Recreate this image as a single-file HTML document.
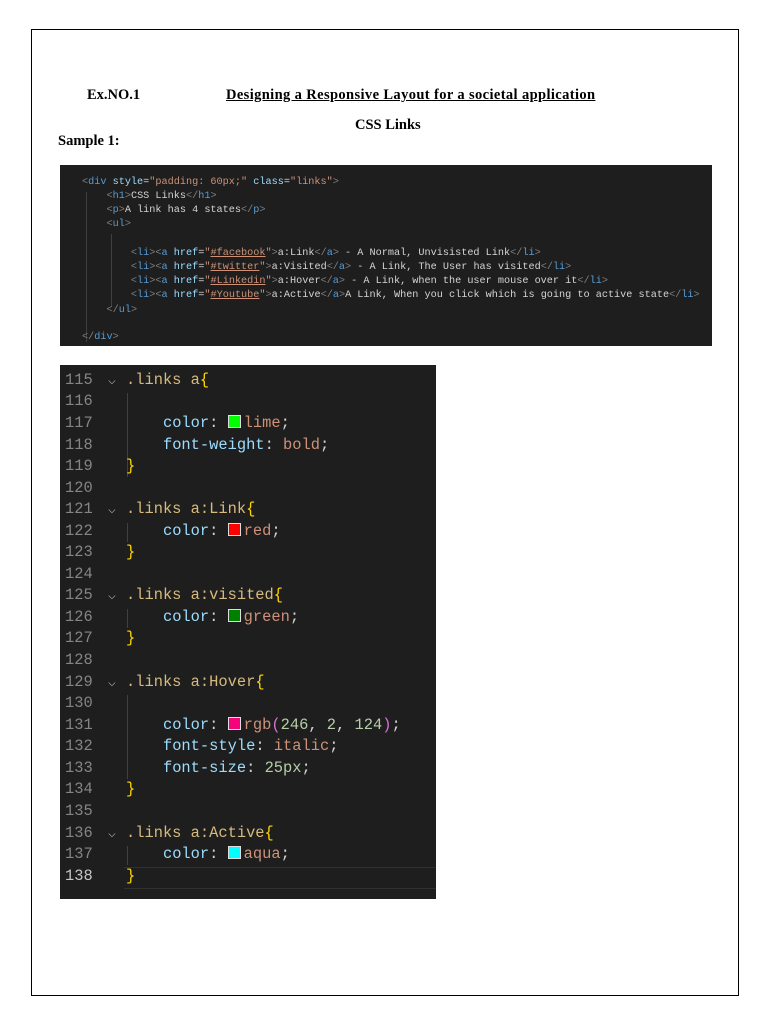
<!DOCTYPE html>
<html><head><meta charset="utf-8"><style>
body{margin:0;width:768px;height:1024px;background:#fff;position:relative;overflow:hidden;font-family:"Liberation Serif",serif}
.page{position:absolute;left:31px;top:29px;width:706px;height:965px;border:1px solid #000}
.t{position:absolute;font-weight:bold;font-size:14.5px;color:#000;white-space:nowrap}
.box{position:absolute;background:#1e1e1e;font-family:"Liberation Mono",monospace;white-space:pre;overflow:hidden}
.l{position:absolute;left:0}
.b1 .l{font-size:10.2px;color:#d4d4d4;left:22px}
.tg{color:#808080}.tn{color:#569cd6}.at{color:#9cdcfe}.sv{color:#ce9178}.u{text-decoration:underline;text-decoration-color:#ce9178}
.b2 .l{font-size:15.4px;color:#d4d4d4}
.n{position:absolute;left:5px;color:#858585;font-size:15.4px}
.sel{color:#d7ba7d}.br{color:#ffd700}.pr{color:#9cdcfe}.v{color:#ce9178}.num{color:#b5cea8}.pb{color:#da70d6}
.sw{display:inline-block;width:11px;height:11px;border:1px solid #ddd;vertical-align:-1px;margin-right:3px}
.ch{position:absolute;left:48px;color:#a0a0a0;font-size:13px}
.g{position:absolute;width:1px;background:#404040}
</style></head><body>
<div class="page"></div>
<div class="t" style="left:87px;top:87px">Ex.NO.1</div>
<div class="t" style="left:226px;top:87px;text-decoration:underline;letter-spacing:0.38px">Designing a Responsive Layout for a societal application</div>
<div class="t" style="left:355px;top:117px">CSS Links</div>
<div class="t" style="left:58px;top:133px">Sample 1:</div>

<div class="box b1" style="left:60px;top:165px;width:652px;height:181px">
<div class="g" style="left:26px;top:27px;height:150px"></div>
<div class="g" style="left:51px;top:69px;height:72px"></div>
<div class="l" style="top:12px"><span class="tg">&lt;</span><span class="tn">div</span> <span class="at">style</span>=<span class="sv">"padding: 60px;"</span> <span class="at">class</span>=<span class="sv">"links"</span><span class="tg">&gt;</span></div>
<div class="l" style="top:26px">    <span class="tg">&lt;</span><span class="tn">h1</span><span class="tg">&gt;</span>CSS Links<span class="tg">&lt;/</span><span class="tn">h1</span><span class="tg">&gt;</span></div>
<div class="l" style="top:40px">    <span class="tg">&lt;</span><span class="tn">p</span><span class="tg">&gt;</span>A link has 4 states<span class="tg">&lt;/</span><span class="tn">p</span><span class="tg">&gt;</span></div>
<div class="l" style="top:54px">    <span class="tg">&lt;</span><span class="tn">ul</span><span class="tg">&gt;</span></div>
<div class="l" style="top:83px">        <span class="tg">&lt;</span><span class="tn">li</span><span class="tg">&gt;&lt;</span><span class="tn">a</span> <span class="at">href</span>=<span class="sv">"<span class="u">#facebook</span>"</span><span class="tg">&gt;</span>a:Link<span class="tg">&lt;/</span><span class="tn">a</span><span class="tg">&gt;</span> - A Normal, Unvisisted Link<span class="tg">&lt;/</span><span class="tn">li</span><span class="tg">&gt;</span></div>
<div class="l" style="top:97px">        <span class="tg">&lt;</span><span class="tn">li</span><span class="tg">&gt;&lt;</span><span class="tn">a</span> <span class="at">href</span>=<span class="sv">"<span class="u">#twitter</span>"</span><span class="tg">&gt;</span>a:Visited<span class="tg">&lt;/</span><span class="tn">a</span><span class="tg">&gt;</span> - A Link, The User has visited<span class="tg">&lt;/</span><span class="tn">li</span><span class="tg">&gt;</span></div>
<div class="l" style="top:111px">        <span class="tg">&lt;</span><span class="tn">li</span><span class="tg">&gt;&lt;</span><span class="tn">a</span> <span class="at">href</span>=<span class="sv">"<span class="u">#Linkedin</span>"</span><span class="tg">&gt;</span>a:Hover<span class="tg">&lt;/</span><span class="tn">a</span><span class="tg">&gt;</span> - A Link, when the user mouse over it<span class="tg">&lt;/</span><span class="tn">li</span><span class="tg">&gt;</span></div>
<div class="l" style="top:125px">        <span class="tg">&lt;</span><span class="tn">li</span><span class="tg">&gt;&lt;</span><span class="tn">a</span> <span class="at">href</span>=<span class="sv">"<span class="u">#Youtube</span>"</span><span class="tg">&gt;</span>a:Active<span class="tg">&lt;/</span><span class="tn">a</span><span class="tg">&gt;</span>A Link, When you click which is going to active state<span class="tg">&lt;/</span><span class="tn">li</span><span class="tg">&gt;</span></div>
<div class="l" style="top:140px">    <span class="tg">&lt;/</span><span class="tn">ul</span><span class="tg">&gt;</span></div>
<div class="l" style="top:167px"><span class="tg">&lt;/</span><span class="tn">div</span><span class="tg">&gt;</span></div>
</div>

<div class="box b2" style="left:60px;top:365px;width:376px;height:534px">
<div class="g" style="left:67px;top:28px;height:84px"></div>
<div class="g" style="left:67px;top:158px;height:19px"></div>
<div class="g" style="left:67px;top:244px;height:19px"></div>
<div class="g" style="left:67px;top:330px;height:84px"></div>
<div class="g" style="left:67px;top:481px;height:19px"></div>
<div style="position:absolute;left:64px;top:502px;width:312px;height:20px;border-top:1px solid #303030;border-bottom:1px solid #303030"></div>
<div class="n" style="top:6px">115</div><div class="ch" style="top:8px">⌵</div><div class="l" style="left:66px;top:6px"><span class="sel">.links a</span><span class="br">{</span></div>
<div class="n" style="top:27px">116</div>
<div class="n" style="top:49px">117</div><div class="l" style="left:66px;top:49px">    <span class="pr">color</span>: <span class="sw" style="background:#0f0"></span><span class="v">lime</span>;</div>
<div class="n" style="top:71px">118</div><div class="l" style="left:66px;top:71px">    <span class="pr">font-weight</span>: <span class="v">bold</span>;</div>
<div class="n" style="top:92px">119</div><div class="l" style="left:66px;top:92px"><span class="br">}</span></div>
<div class="n" style="top:114px">120</div>
<div class="n" style="top:135px">121</div><div class="ch" style="top:137px">⌵</div><div class="l" style="left:66px;top:135px"><span class="sel">.links a:Link</span><span class="br">{</span></div>
<div class="n" style="top:157px">122</div><div class="l" style="left:66px;top:157px">    <span class="pr">color</span>: <span class="sw" style="background:#f00"></span><span class="v">red</span>;</div>
<div class="n" style="top:178px">123</div><div class="l" style="left:66px;top:178px"><span class="br">}</span></div>
<div class="n" style="top:200px">124</div>
<div class="n" style="top:221px">125</div><div class="ch" style="top:223px">⌵</div><div class="l" style="left:66px;top:221px"><span class="sel">.links a:visited</span><span class="br">{</span></div>
<div class="n" style="top:243px">126</div><div class="l" style="left:66px;top:243px">    <span class="pr">color</span>: <span class="sw" style="background:#008000"></span><span class="v">green</span>;</div>
<div class="n" style="top:264px">127</div><div class="l" style="left:66px;top:264px"><span class="br">}</span></div>
<div class="n" style="top:286px">128</div>
<div class="n" style="top:308px">129</div><div class="ch" style="top:310px">⌵</div><div class="l" style="left:66px;top:308px"><span class="sel">.links a:Hover</span><span class="br">{</span></div>
<div class="n" style="top:329px">130</div>
<div class="n" style="top:351px">131</div><div class="l" style="left:66px;top:351px">    <span class="pr">color</span>: <span class="sw" style="background:#f6027c"></span><span class="v">rgb</span><span class="pb">(</span><span class="num">246</span>, <span class="num">2</span>, <span class="num">124</span><span class="pb">)</span>;</div>
<div class="n" style="top:372px">132</div><div class="l" style="left:66px;top:372px">    <span class="pr">font-style</span>: <span class="v">italic</span>;</div>
<div class="n" style="top:394px">133</div><div class="l" style="left:66px;top:394px">    <span class="pr">font-size</span>: <span class="num">25px</span>;</div>
<div class="n" style="top:415px">134</div><div class="l" style="left:66px;top:415px"><span class="br">}</span></div>
<div class="n" style="top:437px">135</div>
<div class="n" style="top:459px">136</div><div class="ch" style="top:461px">⌵</div><div class="l" style="left:66px;top:459px"><span class="sel">.links a:Active</span><span class="br">{</span></div>
<div class="n" style="top:480px">137</div><div class="l" style="left:66px;top:480px">    <span class="pr">color</span>: <span class="sw" style="background:#0ff"></span><span class="v">aqua</span>;</div>
<div class="n" style="top:502px;color:#c6c6c6">138</div><div class="l" style="left:66px;top:502px"><span class="br">}</span></div>
</div>
</body></html>
